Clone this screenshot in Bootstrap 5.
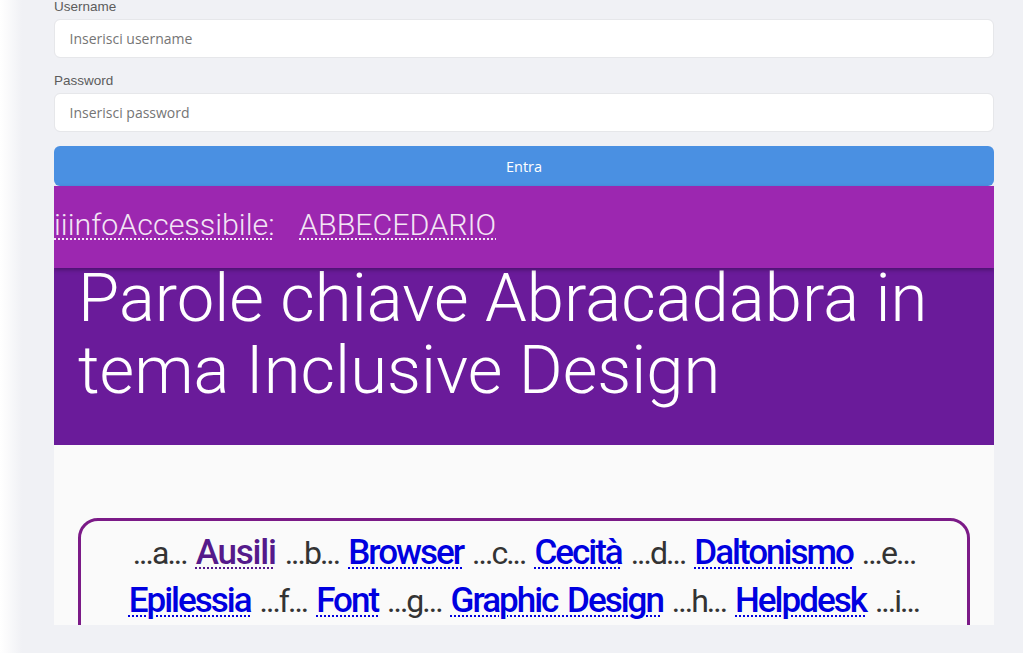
<!DOCTYPE html>
<html lang="it">
<head>
  <meta charset="UTF-8" />
  <title>Parole chiave Abracadabra</title>
  <link href="https://cdn.jsdelivr.net/npm/bootstrap@5.3.0/dist/css/bootstrap.min.css" rel="stylesheet" />
  <style>
    html, body { height: 653px; overflow: hidden; }
    body { background: #f0f1f5; }
    .page-shell { height: 653px; }
    .side-shade { width: 22px; flex: none; background: linear-gradient(to right, #fff 0%, #fbfbfc 30%, #f0f1f5 100%); }
    .page-col { width: 940px; margin-left: 32px; height: 625px; overflow: hidden; flex: none; }
    .login-form label { display: block; font: 13.5px/14px "Liberation Sans", sans-serif; color: #5c5c5c; margin-bottom: 5px; }
    .login-form .field-wrap { margin-bottom: 16px; }
    .login-form .field-wrap + .field-wrap { margin-bottom: 14px; }
    .login-form .form-control { height: 39px; font: 14px "Open Sans", sans-serif; padding: 0 15px 0 14.5px; border: 1px solid #e6e7ea; border-radius: 6px; box-shadow: none; }
    .login-form .form-control::placeholder { color: #757575; opacity: 1; }
    .enter-btn { height: 40px; background: #4a90e2; border: 0; border-radius: 6px; color: #fff; font: 14.5px "Open Sans", sans-serif; }
    .purple-bar { height: 82px; background: #9c27b0; position: relative; z-index: 1; box-shadow: 0 2px 4px rgba(0,0,0,.3); font: 300 30.4px/78px Roboto, sans-serif; color: #f3e5f5; }
    .purple-bar a { color: inherit; text-decoration: underline dotted; text-decoration-thickness: 2px; text-underline-offset: 3px; margin-right: 17px; }
    .title-band { display: flow-root; height: 177px; background: #6a1b9a; padding: 0 24px; color: #fff; }
    .title-band h1 { font: 300 67px/72px Roboto, sans-serif; margin: -6px 0 0; padding: 0; }
    .content-area { background: #fafafa; padding: 73px 24px 0; height: 180px; }
    .letters-box { border: 3px solid #7b1a87; border-radius: 20px; height: 300px; padding: 8px 20px; text-align: center; font: 400 32px/48px Roboto, sans-serif; letter-spacing: -2px; word-spacing: 3px; color: #333; }
    .letters-box a { font-weight: 500; font-size: 35px; line-height: 0; color: #0000e0; text-decoration: underline dotted; text-decoration-thickness: 2px; text-underline-offset: 3px; }
    .letters-box a.seen { color: #551a8b; letter-spacing: -1.2px; }
  </style>
</head>
<body>
  <div class="page-shell d-flex">
    <div class="side-shade"></div>
    <div class="page-col">
      <form class="login-form d-flex flex-column">
        <div class="field-wrap">
          <label for="user">Username</label>
          <input id="user" type="text" class="form-control" placeholder="Inserisci username" />
        </div>
        <div class="field-wrap">
          <label for="pass">Password</label>
          <input id="pass" type="password" class="form-control" placeholder="Inserisci password" />
        </div>
        <button type="button" class="btn enter-btn w-100">Entra</button>
      </form>
      <div class="purple-bar">
        <a href="#">iiinfoAccessibile:</a> <a href="#">ABBECEDARIO</a>
      </div>
      <div class="title-band">
        <h1>Parole chiave Abracadabra in tema Inclusive Design</h1>
      </div>
      <div class="content-area">
        <div class="letters-box">
          ...a... <a class="seen" href="#">Ausili</a> ...b... <a href="#">Browser</a> ...c... <a href="#">Cecità</a> ...d... <a href="#">Daltonismo</a> ...e...
          <a href="#">Epilessia</a> ...f... <a href="#">Font</a> ...g... <a href="#">Graphic Design</a> ...h... <a href="#">Helpdesk</a> ...i...
        </div>
      </div>
    </div>
  </div>
  <script src="https://cdn.jsdelivr.net/npm/bootstrap@5.3.0/dist/js/bootstrap.bundle.min.js"></script>
</body>
</html>
